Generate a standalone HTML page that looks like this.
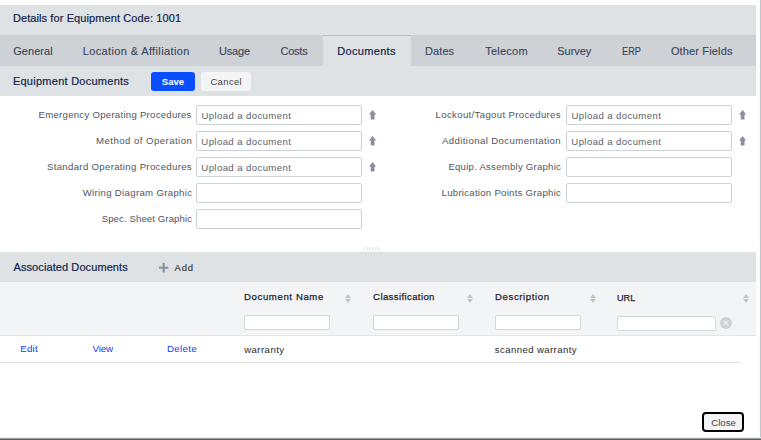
<!DOCTYPE html>
<html>
<head>
<meta charset="utf-8">
<title>Details for Equipment Code: 1001</title>
<style>
*{box-sizing:border-box;margin:0;padding:0}
html,body{width:761px;height:440px;overflow:hidden;background:#fff}
body{position:relative;font-family:"Liberation Sans",sans-serif;font-size:12px;color:#333}
.abs{position:absolute;white-space:nowrap}
.t{position:absolute;white-space:nowrap;line-height:16px;height:16px}
#title{left:0;top:5px;width:756px;height:30px;background:#dfe2e5}
#tabs{left:0;top:35px;width:756px;height:31px;background:#ced2d6}
#tabact{left:323px;top:35px;width:88px;height:31px;background:#dfe2e5;border-top:1px solid #f0c030}
#sec1{left:0;top:66px;width:756px;height:30px;background:#dfe2e5}
#sec2{left:0;top:252px;width:756px;height:30px;background:#dfe2e5}
#thead{left:0;top:282px;width:756px;height:54px;background:#f3f4f6;border-bottom:1px solid #e3e5e8}
#rowline{left:0;top:362px;width:741px;height:1px;background:#e0e2e4}
#rborder{left:759px;top:0;width:2px;height:440px;background:linear-gradient(90deg,#fafafa 0,#fafafa 1px,#c4c7ca 1px)}
#bborder{left:0;top:437px;width:761px;height:3px;background:linear-gradient(#eceded 0,#eceded 1px,#9ea1a3 1px,#9ea1a3 2px,#5c5f62 2px)}
.tab{color:#3a4358;font-size:11px;-webkit-text-stroke:0.12px #3a4358}
.hd{color:#131e4b;font-size:11px;-webkit-text-stroke:0.2px #131e4b}
.lbl{color:#4f5562;font-size:9.6px;text-align:right}
.in{position:absolute;height:20px;width:166px;background:#fff;border:1px solid #cbd3d8;border-radius:2px}
.ph{color:#5a5f68;font-size:9.6px}
.th{color:#1f2430;font-size:9.6px;-webkit-text-stroke:0.25px #1f2430}
.fin{position:absolute;height:15px;width:86px;background:#fff;border:1px solid #d0d8dd;border-radius:2px}
.lnk{color:#1040fa;font-size:9.8px}
.td{color:#2a2a2a;font-size:9.6px}
.btn{position:absolute;height:19px;border-radius:3px;font-size:10px;text-align:center;line-height:19px}
svg{position:absolute;overflow:visible}
</style>
</head>
<body>
<div class="abs" id="title"></div>
<div class="abs" id="tabs"></div>
<div class="abs" id="tabact"></div>
<div class="abs" id="sec1"></div>
<div class="abs" id="sec2"></div>
<div class="abs" id="thead"></div>
<div class="abs" id="rowline"></div>
<div class="abs" id="rborder"></div>
<div class="abs" id="bborder"></div>

<span class="t hd" id="ttl" style="left:12.9px;top:10px;letter-spacing:0.10px">Details for Equipment Code: 1001</span>

<span class="t tab" id="tb1" style="left:13.2px;top:43px;letter-spacing:0.06px">General</span>
<span class="t tab" id="tb2" style="left:82.7px;top:43px;letter-spacing:0.37px">Location &amp; Affiliation</span>
<span class="t tab" id="tb3" style="left:218.9px;top:43px;letter-spacing:-0.16px">Usage</span>
<span class="t tab" id="tb4" style="left:280.5px;top:43px;letter-spacing:-0.24px">Costs</span>
<span class="t tab" id="tb5" style="left:337.3px;top:43px;color:#131e4b;-webkit-text-stroke:0.2px #131e4b;letter-spacing:0.32px">Documents</span>
<span class="t tab" id="tb6" style="left:425.1px;top:43px;letter-spacing:0.06px">Dates</span>
<span class="t tab" id="tb7" style="left:485.3px;top:43px;letter-spacing:0.22px">Telecom</span>
<span class="t tab" id="tb8" style="left:557.3px;top:43px;letter-spacing:-0.04px">Survey</span>
<span class="t tab" id="tb9" style="left:622px;top:43px;display:inline-block;transform:scaleX(0.84);transform-origin:0 0">ERP</span>
<span class="t tab" id="tb10" style="left:670.9px;top:43px;letter-spacing:0.15px">Other Fields</span>

<span class="t hd" id="s1" style="left:12.9px;top:73px;letter-spacing:0.26px">Equipment Documents</span>
<div class="btn" id="save" style="left:151px;top:72px;width:44px;background:#0a4fff;color:#fff;font-weight:bold;font-size:9.5px;letter-spacing:0.05px">Save</div>
<div class="btn" id="cancel" style="left:201px;top:72px;width:50px;background:#f3f4f6;color:#444;font-size:9.5px;letter-spacing:0.35px;padding-left:0.5px">Cancel</div>

<!-- left form column -->
<span class="t lbl" id="l1" style="right:569.3px;top:107px;letter-spacing:0.27px">Emergency Operating Procedures</span>
<span class="t lbl" id="l2" style="right:568.7px;top:133px;letter-spacing:0.46px">Method of Operation</span>
<span class="t lbl" id="l3" style="right:569.0px;top:159px;letter-spacing:0.33px">Standard Operating Procedures</span>
<span class="t lbl" id="l4" style="right:568.7px;top:185px;letter-spacing:0.33px">Wiring Diagram Graphic</span>
<span class="t lbl" id="l5" style="right:568.9px;top:211px;letter-spacing:0.10px">Spec. Sheet Graphic</span>
<div class="in" style="left:196px;top:105px"></div>
<div class="in" style="left:196px;top:131px"></div>
<div class="in" style="left:196px;top:157px"></div>
<div class="in" style="left:196px;top:183px"></div>
<div class="in" style="left:196px;top:209px"></div>
<span class="t ph" id="p1" style="left:201.4px;top:108px;letter-spacing:0.39px">Upload a document</span>
<span class="t ph" id="p2" style="left:201.3px;top:134px;letter-spacing:0.40px">Upload a document</span>
<span class="t ph" id="p3" style="left:201.3px;top:160px;letter-spacing:0.40px">Upload a document</span>

<!-- right form column -->
<span class="t lbl" id="r1" style="right:200.1px;top:107px;letter-spacing:0.34px">Lockout/Tagout Procedures</span>
<span class="t lbl" id="r2" style="right:199.9px;top:133px;letter-spacing:0.41px">Additional Documentation</span>
<span class="t lbl" id="r3" style="right:199.9px;top:159px;letter-spacing:0.24px">Equip. Assembly Graphic</span>
<span class="t lbl" id="r4" style="right:199.9px;top:185px;letter-spacing:0.27px">Lubrication Points Graphic</span>
<div class="in" style="left:566px;top:105px"></div>
<div class="in" style="left:566px;top:131px"></div>
<div class="in" style="left:566px;top:157px"></div>
<div class="in" style="left:566px;top:183px"></div>
<span class="t ph" id="p4" style="left:571.4px;top:108px;letter-spacing:0.39px">Upload a document</span>
<span class="t ph" id="p5" style="left:571.3px;top:134px;letter-spacing:0.40px">Upload a document</span>

<!-- upload arrows -->
<svg class="arr" style="left:368.9px;top:110.3px" width="7.2" height="9.6" viewBox="0 0 7.2 9.6"><path d="M3.6 0L7.2 4.5H5.5V9.6H1.7V4.5H0Z" fill="#8a8f9b"/></svg>
<svg class="arr" style="left:368.9px;top:136.3px" width="7.2" height="9.6" viewBox="0 0 7.2 9.6"><path d="M3.6 0L7.2 4.5H5.5V9.6H1.7V4.5H0Z" fill="#8a8f9b"/></svg>
<svg class="arr" style="left:368.9px;top:162.3px" width="7.2" height="9.6" viewBox="0 0 7.2 9.6"><path d="M3.6 0L7.2 4.5H5.5V9.6H1.7V4.5H0Z" fill="#8a8f9b"/></svg>
<svg class="arr" style="left:738.9px;top:110.3px" width="7.2" height="9.6" viewBox="0 0 7.2 9.6"><path d="M3.6 0L7.2 4.5H5.5V9.6H1.7V4.5H0Z" fill="#8a8f9b"/></svg>
<svg class="arr" style="left:738.9px;top:136.3px" width="7.2" height="9.6" viewBox="0 0 7.2 9.6"><path d="M3.6 0L7.2 4.5H5.5V9.6H1.7V4.5H0Z" fill="#8a8f9b"/></svg>

<!-- resize handle -->
<div class="abs" id="grip" style="left:363px;top:247px;width:18px;height:4px;background:repeating-linear-gradient(90deg,#f0f0f0 0,#f0f0f0 2px,#fff 2px,#fff 3px)"></div>

<span class="t hd" id="s2" style="left:13.5px;top:259px;letter-spacing:0.09px">Associated Documents</span>
<svg style="left:159.4px;top:262.8px" width="9.4" height="9.4" viewBox="0 0 9.4 9.4"><path d="M4.7 0V9.4M0 4.7H9.4" stroke="#8a8f9b" stroke-width="2.1" fill="none"/></svg>
<span class="t" id="add" style="left:174.6px;top:260px;font-size:9.5px;color:#3c3f46;-webkit-text-stroke:0.2px #3c3f46;letter-spacing:0.72px">Add</span>

<span class="t th" id="h1" style="left:244.0px;top:289px;letter-spacing:0.61px">Document Name</span>
<span class="t th" id="h2" style="left:373.1px;top:289px;letter-spacing:0.37px">Classification</span>
<span class="t th" id="h3" style="left:495.1px;top:289px;letter-spacing:0.59px">Description</span>
<span class="t th" id="h4" style="left:617.2px;top:289.7px;display:inline-block;transform:scaleX(0.95);transform-origin:0 0">URL</span>
<svg class="srt" style="left:345.0px;top:293.5px" width="6" height="9" viewBox="0 0 6 9"><path d="M3 0L6 3.9H0ZM3 9L6 5.1H0Z" fill="#c2c5c9"/></svg>
<svg class="srt" style="left:467.0px;top:293.5px" width="6" height="9" viewBox="0 0 6 9"><path d="M3 0L6 3.9H0ZM3 9L6 5.1H0Z" fill="#c2c5c9"/></svg>
<svg class="srt" style="left:590.0px;top:293.5px" width="6" height="9" viewBox="0 0 6 9"><path d="M3 0L6 3.9H0ZM3 9L6 5.1H0Z" fill="#c2c5c9"/></svg>
<svg class="srt" style="left:743.0px;top:293.5px" width="6" height="9" viewBox="0 0 6 9"><path d="M3 0L6 3.9H0ZM3 9L6 5.1H0Z" fill="#c2c5c9"/></svg>

<div class="fin" style="left:244px;top:315px"></div>
<div class="fin" style="left:373px;top:315px"></div>
<div class="fin" style="left:495px;top:315px"></div>
<div class="fin" style="left:617px;top:316px;width:99px"></div>
<svg style="left:720px;top:317px" width="12" height="12" viewBox="0 0 12 12"><circle cx="6" cy="6" r="6" fill="#cdd1d4"/><path d="M3.5 3.5L8.5 8.5M8.5 3.5L3.5 8.5" stroke="#eceeef" stroke-width="1.2"/></svg>

<span class="t lnk" id="a1" style="left:20.3px;top:341px;letter-spacing:0.17px">Edit</span>
<span class="t lnk" id="a2" style="left:92.4px;top:341px;letter-spacing:-0.10px">View</span>
<span class="t lnk" id="a3" style="left:167.0px;top:341px;letter-spacing:0.30px">Delete</span>
<span class="t td" id="d1" style="left:244.2px;top:342px;letter-spacing:0.44px">warranty</span>
<span class="t td" id="d2" style="left:494.8px;top:342px;letter-spacing:0.40px">scanned warranty</span>

<div class="btn" id="close" style="left:702px;top:412px;width:42px;height:20px;line-height:18px;padding-left:1px;font-size:9.6px;letter-spacing:0px;background:#f3f4f6;color:#444;border:2px solid #000;border-radius:4px">Close</div>
</body>
</html>
